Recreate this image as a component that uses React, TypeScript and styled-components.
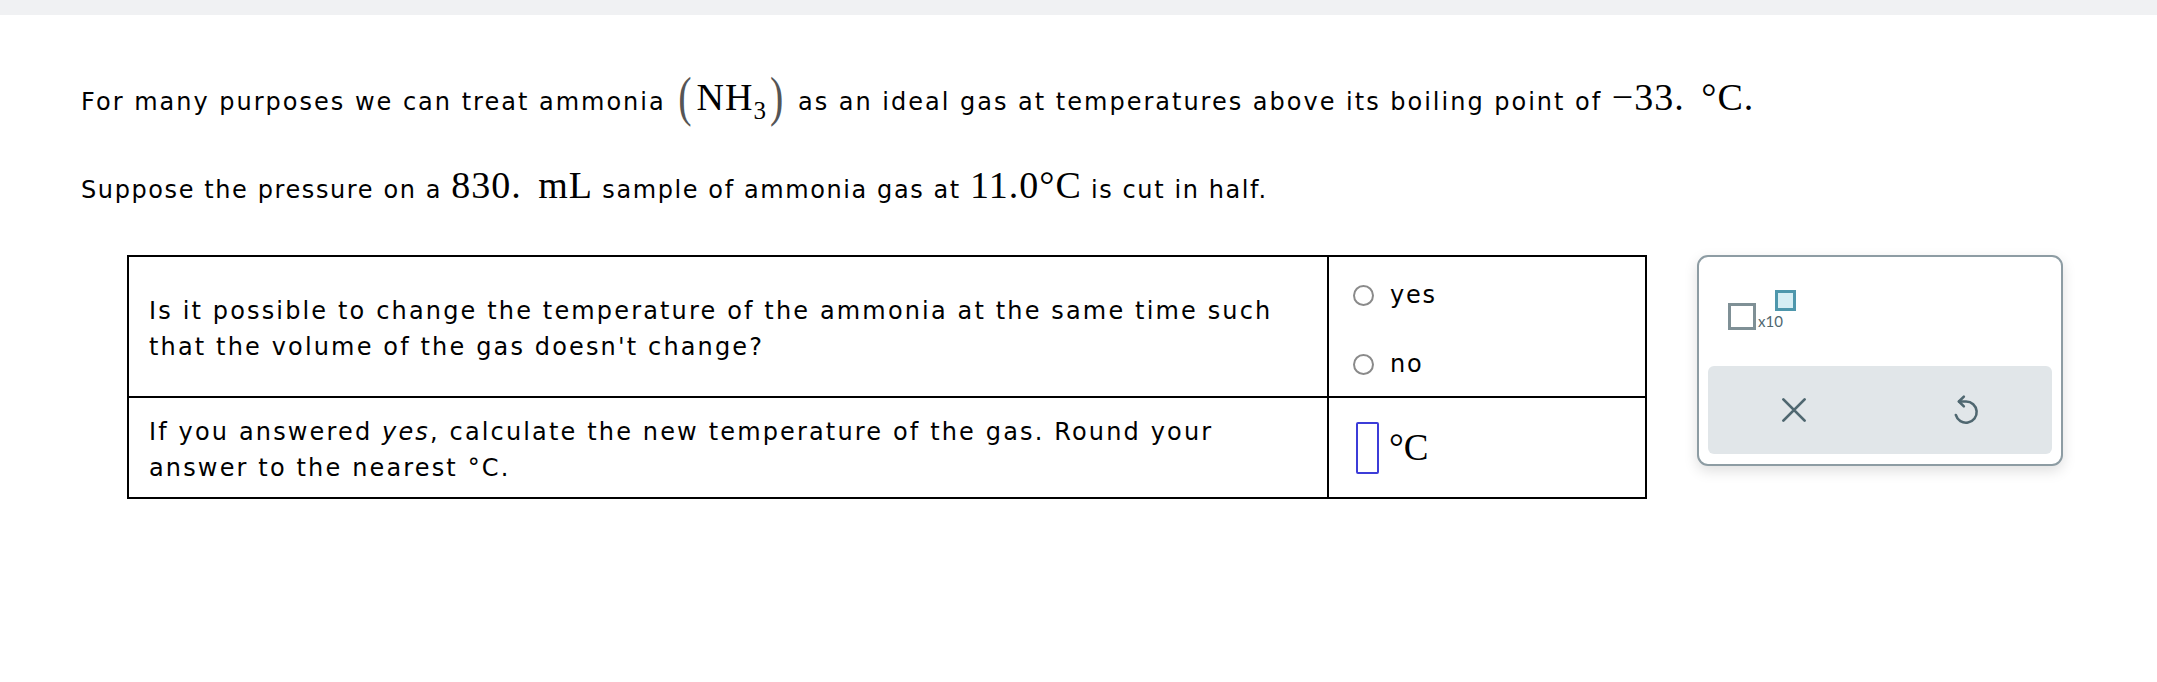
import React from 'react'
import styled, { createGlobalStyle } from 'styled-components'

const GlobalStyle = createGlobalStyle`
  html, body {
    margin: 0;
    padding: 0;
    background: #fff;
  }
  body {
    font-family: 'DejaVu Sans', Verdana, sans-serif;
    color: #000;
  }
`

const TopBar = styled.div`
  height: 15px;
  background-color: #f0f1f3;
`

const Content = styled.main`
  padding: 64px 0 0 81px;
`

const Para = styled.p<{ $spacing?: number }>`
  margin: 0 0 47px 0;
  font-size: 24px;
  line-height: 36px;
  letter-spacing: ${p => p.$spacing ?? 2}px;
  white-space: nowrap;
`

const Math = styled.span`
  font-family: 'Liberation Serif', 'Times New Roman', serif;
  font-size: 38px;
  letter-spacing: 1px;
  word-spacing: 6px;
`

const Paren = styled.span`
  display: inline-block;
  font-family: 'Liberation Serif', 'Times New Roman', serif;
  font-size: 40px;
  color: #555;
  transform: scaleY(1.35);
  margin: 0 3px;
`

const Sub = styled.sub`
  font-size: 25px;
  vertical-align: -9px;
  line-height: 0;
`

const Row = styled.div`
  display: flex;
  align-items: flex-start;
  gap: 50px;
  margin: 12px 0 0 46px;
`

const Table = styled.table`
  border-collapse: collapse;
  width: 1520px;
  border: 2px solid #000;
`

const Tr = styled.tr<{ $h: number }>`
  height: ${p => p.$h}px;
`

const Question = styled.td`
  width: 1200px;
  box-sizing: border-box;
  border: 2px solid #000;
  padding: 5px 28px 0 20px;
  font-size: 24px;
  line-height: 36px;
  letter-spacing: 2.15px;
  vertical-align: middle;
`

const Answer = styled.td`
  border: 2px solid #000;
  padding: 0 0 0 24px;
  vertical-align: middle;
`

const Radios = styled.div`
  display: flex;
  flex-direction: column;
  gap: 33px;
  padding-top: 6px;
`

const RadioLabel = styled.label`
  display: flex;
  align-items: center;
  gap: 16px;
  font-size: 24px;
  line-height: 36px;
  letter-spacing: 1.8px;
`

const Circle = styled.span`
  width: 17px;
  height: 17px;
  border: 2px solid #8a8a8a;
  border-radius: 50%;
  box-sizing: content-box;
`

const UnitRow = styled.div`
  display: flex;
  align-items: center;
  gap: 10px;
  padding-left: 3px;
`

const InputBox = styled.span`
  display: inline-block;
  width: 19px;
  height: 48px;
  border: 2px solid #3c3cd8;
  border-radius: 2px;
`

const Unit = styled.span`
  font-family: 'Liberation Serif', 'Times New Roman', serif;
  font-size: 37px;
`

const Panel = styled.div`
  width: 366px;
  height: 211px;
  box-sizing: border-box;
  border: 2px solid #8d9ca3;
  border-radius: 11px;
  background: #fff;
  box-shadow: 0 5px 14px rgba(0, 0, 0, 0.13);
  display: flex;
  flex-direction: column;
  justify-content: space-between;
  padding: 0 9px 10px 9px;
`

const Sci = styled.div`
  display: flex;
  align-items: flex-end;
  padding: 33px 0 0 20px;
  height: 40px;
`

const Mantissa = styled.span`
  width: 22px;
  height: 21px;
  border: 3px solid #7f9096;
`

const Times10 = styled.span`
  font-family: 'Lato', 'Noto Sans', sans-serif;
  font-size: 15px;
  color: #4f6770;
  margin-left: 2px;
  line-height: 15px;
  margin-bottom: 1px;
`

const Exponent = styled.span`
  align-self: flex-start;
  width: 15px;
  height: 15px;
  border: 3px solid #4e97ac;
  background: #d6eef4;
  margin-left: -8px;
`

const Actions = styled.div`
  height: 88px;
  border-radius: 6px;
  background: #e1e6e9;
  display: grid;
  grid-template-columns: 1fr 1fr;
  align-items: center;
  justify-items: center;
`

const IconButton = styled.button`
  border: none;
  background: transparent;
  padding: 0;
  display: flex;
  color: #4f6770;
`

function ClearIcon() {
  return (
    <svg width="30" height="30" viewBox="0 0 24 24" fill="none" stroke="currentColor" strokeWidth="2.2" strokeLinecap="round">
      <path d="M3.5 3.5 L20.5 20.5 M20.5 3.5 L3.5 20.5" />
    </svg>
  )
}

function UndoIcon() {
  return (
    <svg width="34" height="34" viewBox="0 0 24 24" fill="none" stroke="currentColor" strokeWidth="1.8" strokeLinecap="round" strokeLinejoin="round">
      <path d="M10.5 2.5 L7 6 L10.5 9.5" />
      <path d="M7 6 H12 A7.5 7.5 0 1 1 4.8 15.5" />
    </svg>
  )
}

export default function App() {
  return (
    <>
      <GlobalStyle />
      <TopBar />
      <Content>
        <Para>
          For many purposes we can treat ammonia <Paren>(</Paren>
          <Math>
            NH<Sub>3</Sub>
          </Math>
          <Paren>)</Paren> as an ideal gas at temperatures above its boiling point of <Math>−33. °C.</Math>
        </Para>
        <Para $spacing={1.6}>
          Suppose the pressure on a <Math>830. mL</Math> sample of ammonia gas at <Math>11.0°C</Math> is cut in half.
        </Para>
        <Row>
          <Table>
            <tbody>
              <Tr $h={141}>
                <Question>
                  Is it possible to change the temperature of the ammonia at the same time such that the volume of the
                  gas doesn't change?
                </Question>
                <Answer>
                  <Radios>
                    <RadioLabel>
                      <Circle />
                      yes
                    </RadioLabel>
                    <RadioLabel>
                      <Circle />
                      no
                    </RadioLabel>
                  </Radios>
                </Answer>
              </Tr>
              <Tr $h={101}>
                <Question>
                  If you answered <i>yes</i>, calculate the new temperature of the gas. Round your answer to the nearest
                  °C.
                </Question>
                <Answer>
                  <UnitRow>
                    <InputBox />
                    <Unit>°C</Unit>
                  </UnitRow>
                </Answer>
              </Tr>
            </tbody>
          </Table>
          <Panel>
            <Sci>
              <Mantissa />
              <Times10>x10</Times10>
              <Exponent />
            </Sci>
            <Actions>
              <IconButton title="Clear">
                <ClearIcon />
              </IconButton>
              <IconButton title="Undo">
                <UndoIcon />
              </IconButton>
            </Actions>
          </Panel>
        </Row>
      </Content>
    </>
  )
}
